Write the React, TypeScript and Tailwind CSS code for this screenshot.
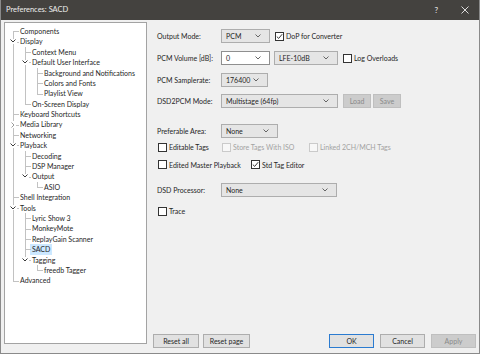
import React from "react";

type N = { l: string; open?: boolean; closed?: boolean; sel?: boolean; c?: N[] };

const tree: N[] = [
  { l: "Components" },
  {
    l: "Display",
    open: true,
    c: [
      { l: "Context Menu" },
      {
        l: "Default User Interface",
        open: true,
        c: [{ l: "Background and Notifications" }, { l: "Colors and Fonts" }, { l: "Playlist View" }],
      },
      { l: "On-Screen Display" },
    ],
  },
  { l: "Keyboard Shortcuts" },
  { l: "Media Library", closed: true },
  { l: "Networking" },
  {
    l: "Playback",
    open: true,
    c: [{ l: "Decoding" }, { l: "DSP Manager" }, { l: "Output", open: true, c: [{ l: "ASIO" }] }],
  },
  { l: "Shell Integration" },
  {
    l: "Tools",
    open: true,
    c: [
      { l: "Lyric Show 3" },
      { l: "MonkeyMote" },
      { l: "ReplayGain Scanner" },
      { l: "SACD", sel: true },
      { l: "Tagging", open: true, c: [{ l: "freedb Tagger" }] },
    ],
  },
  { l: "Advanced" },
];

type Row = {
  l: string;
  depth: number;
  guides: boolean[];
  isLast: boolean;
  first: boolean;
  exp: "open" | "closed" | null;
  sel: boolean;
};

function flatten(nodes: N[], depth: number, guides: boolean[], out: Row[]) {
  nodes.forEach((n, i) => {
    const isLast = i === nodes.length - 1;
    out.push({
      l: n.l,
      depth,
      guides,
      isLast,
      first: depth === 0 && i === 0,
      exp: n.open ? "open" : n.closed ? "closed" : null,
      sel: !!n.sel,
    });
    if (n.open && n.c) flatten(n.c, depth + 1, [...guides, !isLast], out);
  });
  return out;
}

const rows = flatten(tree, 0, [], []);

function TreeRow({ r }: { r: Row }) {
  return (
    <div className="flex h-[10.4px] items-center">
      {r.guides.map((g, i) => (
        <div key={i} className="relative h-full w-[12px] shrink-0">
          {g && <div className="absolute left-[6px] top-0 bottom-0 w-px bg-[#c2c2c2]" />}
        </div>
      ))}
      <div className="relative h-full w-[12px] shrink-0">
        {!r.first && <div className="absolute left-[6px] top-0 h-1/2 w-px bg-[#c2c2c2]" />}
        {!r.isLast && <div className="absolute left-[6px] top-1/2 bottom-0 w-px bg-[#c2c2c2]" />}
        <div className="absolute left-[6px] top-1/2 h-px w-[6px] bg-[#c2c2c2]" />
        {r.exp === "open" && (
          <div className="absolute left-[2px] top-[2.5px] flex h-[5px] w-[8px] items-center justify-center bg-white">
            <svg width="6" height="4" viewBox="0 0 6 4">
              <polyline points="0.5,0.5 3,3 5.5,0.5" fill="none" stroke="#3a3a3a" strokeWidth="1" />
            </svg>
          </div>
        )}
        {r.exp === "closed" && (
          <div className="absolute left-[3px] top-[1.5px] flex h-[7px] w-[6px] items-center justify-center bg-white">
            <svg width="4" height="6" viewBox="0 0 4 6">
              <polyline points="0.5,0.5 3,3 0.5,5.5" fill="none" stroke="#9a9a9a" strokeWidth="1" />
            </svg>
          </div>
        )}
      </div>
      {r.sel ? (
        <span className="ml-[-1px] flex h-full items-center bg-[#cce8ff] px-[2px] whitespace-nowrap">{r.l}</span>
      ) : (
        <span className="ml-[1px] whitespace-nowrap">{r.l}</span>
      )}
    </div>
  );
}

function Chevron() {
  return (
    <svg width="6" height="4" viewBox="0 0 6 4" className="shrink-0">
      <polyline points="0.5,0.5 3,3 5.5,0.5" fill="none" stroke="#555" strokeWidth="0.9" />
    </svg>
  );
}

function Select({ value, className, white }: { value: string; className: string; white?: boolean }) {
  return (
    <div
      className={
        "flex h-[14px] items-center justify-between border pl-[4px] pr-[8px] " +
        (white ? "border-[#8f8f8f] bg-white " : "border-[#adadad] bg-[#e5e5e5] ") +
        className
      }
    >
      <span className="whitespace-nowrap">{value}</span>
      <Chevron />
    </div>
  );
}

function Check({
  label,
  checked,
  disabled,
  className,
}: {
  label: string;
  checked?: boolean;
  disabled?: boolean;
  className?: string;
}) {
  return (
    <div className={"flex items-center " + (className || "")}>
      <div
        className={
          "flex h-[9px] w-[9px] shrink-0 items-center justify-center border " +
          (disabled ? "border-[#cacaca] bg-[#f7f7f7]" : "border-[#333333] bg-white")
        }
      >
        {checked && (
          <svg width="7" height="7" viewBox="0 0 7 7">
            <polyline points="0.8,3.6 2.7,5.4 6.2,1.2" fill="none" stroke="#222" strokeWidth="0.9" />
          </svg>
        )}
      </div>
      <span className={"ml-[2px] whitespace-nowrap " + (disabled ? "text-[#a2a2a2]" : "")}>{label}</span>
    </div>
  );
}

function Btn({ label, className, disabled, primary }: { label: string; className: string; disabled?: boolean; primary?: boolean }) {
  return (
    <div
      className={
        "flex h-[14px] items-center justify-center border " +
        (disabled
          ? "border-[#bfbfbf] bg-[#cccccc] text-[#8a8a8a] "
          : primary
          ? "border-[#2b7bd0] bg-[#e1e1e1] "
          : "border-[#adadad] bg-[#e1e1e1] ") +
        className
      }
    >
      {label}
    </div>
  );
}

export default function App() {
  return (
    <div className="flex h-[354px] w-[480px] flex-col overflow-hidden border-x border-b border-[#8a8a8a] bg-[#f0f0f0] font-['Lato',sans-serif] text-[7px] text-[#262626]">
      <div className="flex h-[20px] shrink-0 items-center bg-[#44423f] pl-[5px] text-[7.5px] text-[#eeeeee]">
        <span>Preferences: SACD</span>
        <span className="ml-auto mr-[23px] text-[8px]">?</span>
        <svg width="8" height="8" viewBox="0 0 8 8" className="mr-[10px]">
          <path d="M0.5 0.5 L7.5 7.5 M7.5 0.5 L0.5 7.5" stroke="#eeeeee" strokeWidth="0.9" />
        </svg>
      </div>
      <div className="flex flex-1">
        <div className="ml-[3px] mt-[2px] h-[322px] w-[143px] shrink-0 border border-[#a3a3a3] bg-white pl-[2px] pt-[3px]">
          {rows.map((r, i) => (
            <TreeRow key={i} r={r} />
          ))}
        </div>
        <div className="ml-[6px] flex flex-1 flex-col pr-[3px]">
          <div className="mt-[9px] flex items-center">
            <div className="w-[68px] pl-[4px]">Output Mode:</div>
            <Select value="PCM" className="w-[49px]" />
            <Check label="DoP for Converter" checked className="ml-[5px]" />
          </div>
          <div className="mt-[8px] flex items-center">
            <div className="w-[68px] pl-[4px]">PCM Volume [dB]:</div>
            <Select value="0" white className="w-[49px]" />
            <Select value="LFE-10dB" className="ml-[4px] w-[64px]" />
            <Check label="Log Overloads" className="ml-[5px]" />
          </div>
          <div className="mt-[8px] flex items-center">
            <div className="w-[68px] pl-[4px]">PCM Samplerate:</div>
            <Select value="176400" className="w-[47px]" />
          </div>
          <div className="mt-[7px] flex items-center">
            <div className="w-[68px] pl-[4px]">DSD2PCM Mode:</div>
            <Select value="Multistage (64fp)" className="w-[117px]" />
            <Btn label="Load" disabled className="ml-[5px] w-[28px]" />
            <Btn label="Save" disabled className="ml-[2px] w-[28px]" />
          </div>
          <div className="mt-[16px] flex items-center">
            <div className="w-[68px] pl-[4px]">Preferable Area:</div>
            <Select value="None" className="w-[57px]" />
          </div>
          <div className="mt-[4px] flex items-center pl-[5px]">
            <Check label="Editable Tags" className="w-[64px]" />
            <Check label="Store Tags With ISO" disabled className="w-[87px]" />
            <Check label="Linked 2CH/MCH Tags" disabled />
          </div>
          <div className="mt-[7px] flex items-center pl-[5px]">
            <Check label="Edited Master Playback" className="w-[93px]" />
            <Check label="Std Tag Editor" checked />
          </div>
          <div className="mt-[13px] flex items-center">
            <div className="w-[68px] pl-[4px]">DSD Processor:</div>
            <Select value="None" className="w-[116px]" />
          </div>
          <div className="mt-[9px] flex items-center pl-[5px]">
            <Check label="Trace" />
          </div>
          <div className="mb-[5px] mt-auto flex items-center">
            <Btn label="Reset all" className="w-[46px]" />
            <Btn label="Reset page" className="ml-[4px] w-[47px]" />
            <Btn label="OK" primary className="ml-auto w-[45px]" />
            <Btn label="Cancel" className="ml-[6px] w-[45px]" />
            <Btn label="Apply" disabled className="ml-[6px] w-[45px]" />
          </div>
        </div>
      </div>
    </div>
  );
}
